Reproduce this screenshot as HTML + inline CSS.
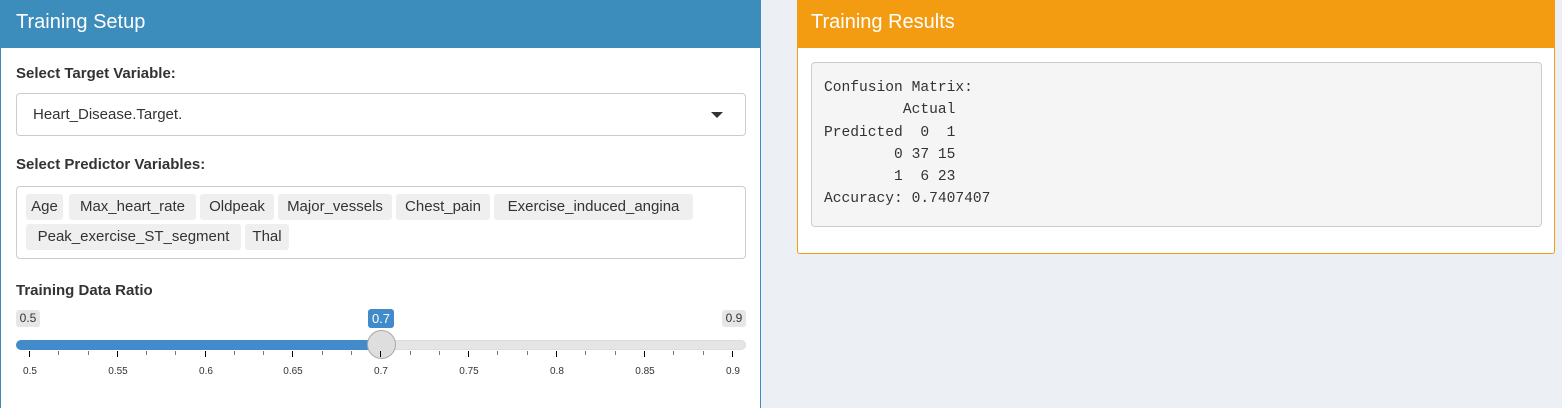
<!DOCTYPE html>
<html><head><style>
*{box-sizing:border-box;margin:0;padding:0}
html,body{overflow:hidden}
body{width:1562px;height:408px;background:#ecf0f5;font-family:"Liberation Sans",sans-serif;color:#333;position:relative;overflow:hidden}
.abs{position:absolute}
.lp{left:0;top:0;width:761px;height:408px;background:#fff;border:1px solid #3c8dbc;border-top:none;border-bottom:none}
.lh{left:0;top:0;width:761px;height:48px;background:#3c8dbc;color:#fff;font-size:20px;padding:11px 16px}
.rp{left:797px;top:0;width:758px;height:254px;background:#fff;border:1px solid #f39c12;border-radius:0 0 3px 3px}
.rh{left:797px;top:0;width:758px;height:48px;background:#f39c12;color:#fff;font-size:20px;padding:11px 14px}
.lbl{font-weight:bold;font-size:15px;color:#333}
.sel{border:1px solid #ccc;border-radius:4px;background:#fff}
.tag{position:absolute;height:26px;background:#efefef;border-radius:3px;font-size:15px;line-height:26px;text-align:center;color:#333}
pre{font-family:"Liberation Mono",monospace;font-size:14.6px;line-height:22.3px;color:#333}
.tk{position:absolute;top:351px;width:1px;background:#000}
.tl{position:absolute;top:366px;font-size:10px;width:40px;margin-left:-20px;text-align:center;color:#333}
</style></head><body>
<div class="abs lp"></div>
<div class="abs lh">Training Setup</div>
<div class="abs lbl" style="left:16px;top:65px">Select Target Variable:</div>
<div class="abs sel" style="left:16px;top:93px;width:730px;height:43px;font-size:15px;padding:12px 16px">Heart_Disease.Target.</div>
<div class="abs" style="left:711px;top:112px;width:0;height:0;border-left:6px solid transparent;border-right:6px solid transparent;border-top:6px solid #333"></div>
<div class="abs lbl" style="left:16px;top:156px">Select Predictor Variables:</div>
<div class="abs sel" style="left:16px;top:186px;width:730px;height:73px"></div>
<div class="tag" style="left:26px;top:194px;width:37px">Age</div>
<div class="tag" style="left:69px;top:194px;width:127px">Max_heart_rate</div>
<div class="tag" style="left:200px;top:194px;width:74px">Oldpeak</div>
<div class="tag" style="left:278px;top:194px;width:114px">Major_vessels</div>
<div class="tag" style="left:396px;top:194px;width:94px">Chest_pain</div>
<div class="tag" style="left:494px;top:194px;width:199px">Exercise_induced_angina</div>
<div class="tag" style="left:26px;top:224px;width:215px">Peak_exercise_ST_segment</div>
<div class="tag" style="left:245px;top:224px;width:44px">Thal</div>
<div class="abs lbl" style="left:16px;top:282px">Training Data Ratio</div>
<div class="abs" style="left:16px;top:310px;width:24px;height:17px;background:#e6e6e6;border-radius:3px;font-size:12px;text-align:center;line-height:17px">0.5</div>
<div class="abs" style="left:722px;top:310px;width:24px;height:17px;background:#e6e6e6;border-radius:3px;font-size:12px;text-align:center;line-height:17px">0.9</div>
<div class="abs" style="left:368px;top:309px;width:26px;height:19px;background:#428bca;color:#fff;border-radius:3px;font-size:13px;text-align:center;line-height:19px">0.7</div>
<div class="abs" style="left:16px;top:340px;width:730px;height:10px;background:#e5e5e5;border-radius:5px;border:1px solid #ddd"></div>
<div class="abs" style="left:16px;top:340px;width:366px;height:10px;background:#428bca;border-radius:5px 0 0 5px"></div>
<div class="abs" style="left:367px;top:330px;width:29px;height:29px;border-radius:50%;background:#dedede;border:1px solid #aaa"></div>
<div class="tk" style="left:29px;height:6px"></div><div class="tk" style="left:58px;height:4px;background:#777"></div><div class="tk" style="left:88px;height:4px;background:#777"></div>
<div class="tk" style="left:117px;height:6px"></div><div class="tk" style="left:146px;height:4px;background:#777"></div><div class="tk" style="left:175px;height:4px;background:#777"></div>
<div class="tk" style="left:205px;height:6px"></div><div class="tk" style="left:234px;height:4px;background:#777"></div><div class="tk" style="left:263px;height:4px;background:#777"></div>
<div class="tk" style="left:292px;height:6px"></div><div class="tk" style="left:322px;height:4px;background:#777"></div><div class="tk" style="left:351px;height:4px;background:#777"></div>
<div class="tk" style="left:380px;height:6px"></div><div class="tk" style="left:410px;height:4px;background:#777"></div><div class="tk" style="left:439px;height:4px;background:#777"></div>
<div class="tk" style="left:468px;height:6px"></div><div class="tk" style="left:497px;height:4px;background:#777"></div><div class="tk" style="left:527px;height:4px;background:#777"></div>
<div class="tk" style="left:556px;height:6px"></div><div class="tk" style="left:585px;height:4px;background:#777"></div><div class="tk" style="left:615px;height:4px;background:#777"></div>
<div class="tk" style="left:644px;height:6px"></div><div class="tk" style="left:673px;height:4px;background:#777"></div><div class="tk" style="left:703px;height:4px;background:#777"></div>
<div class="tk" style="left:732px;height:6px"></div>
<div class="tl" style="left:30px">0.5</div><div class="tl" style="left:118px">0.55</div><div class="tl" style="left:206px">0.6</div><div class="tl" style="left:293px">0.65</div><div class="tl" style="left:381px">0.7</div><div class="tl" style="left:469px">0.75</div><div class="tl" style="left:557px">0.8</div><div class="tl" style="left:645px">0.85</div><div class="tl" style="left:733px">0.9</div>
<div class="abs rp"></div>
<div class="abs rh">Training Results</div>
<div class="abs" style="left:811px;top:62px;width:731px;height:165px;background:#f5f5f5;border:1px solid #ccc;border-radius:4px;padding:14px 12px">
<pre>Confusion Matrix:
         Actual
Predicted  0  1
        0 37 15
        1  6 23
Accuracy: 0.7407407</pre></div>
</body></html>
